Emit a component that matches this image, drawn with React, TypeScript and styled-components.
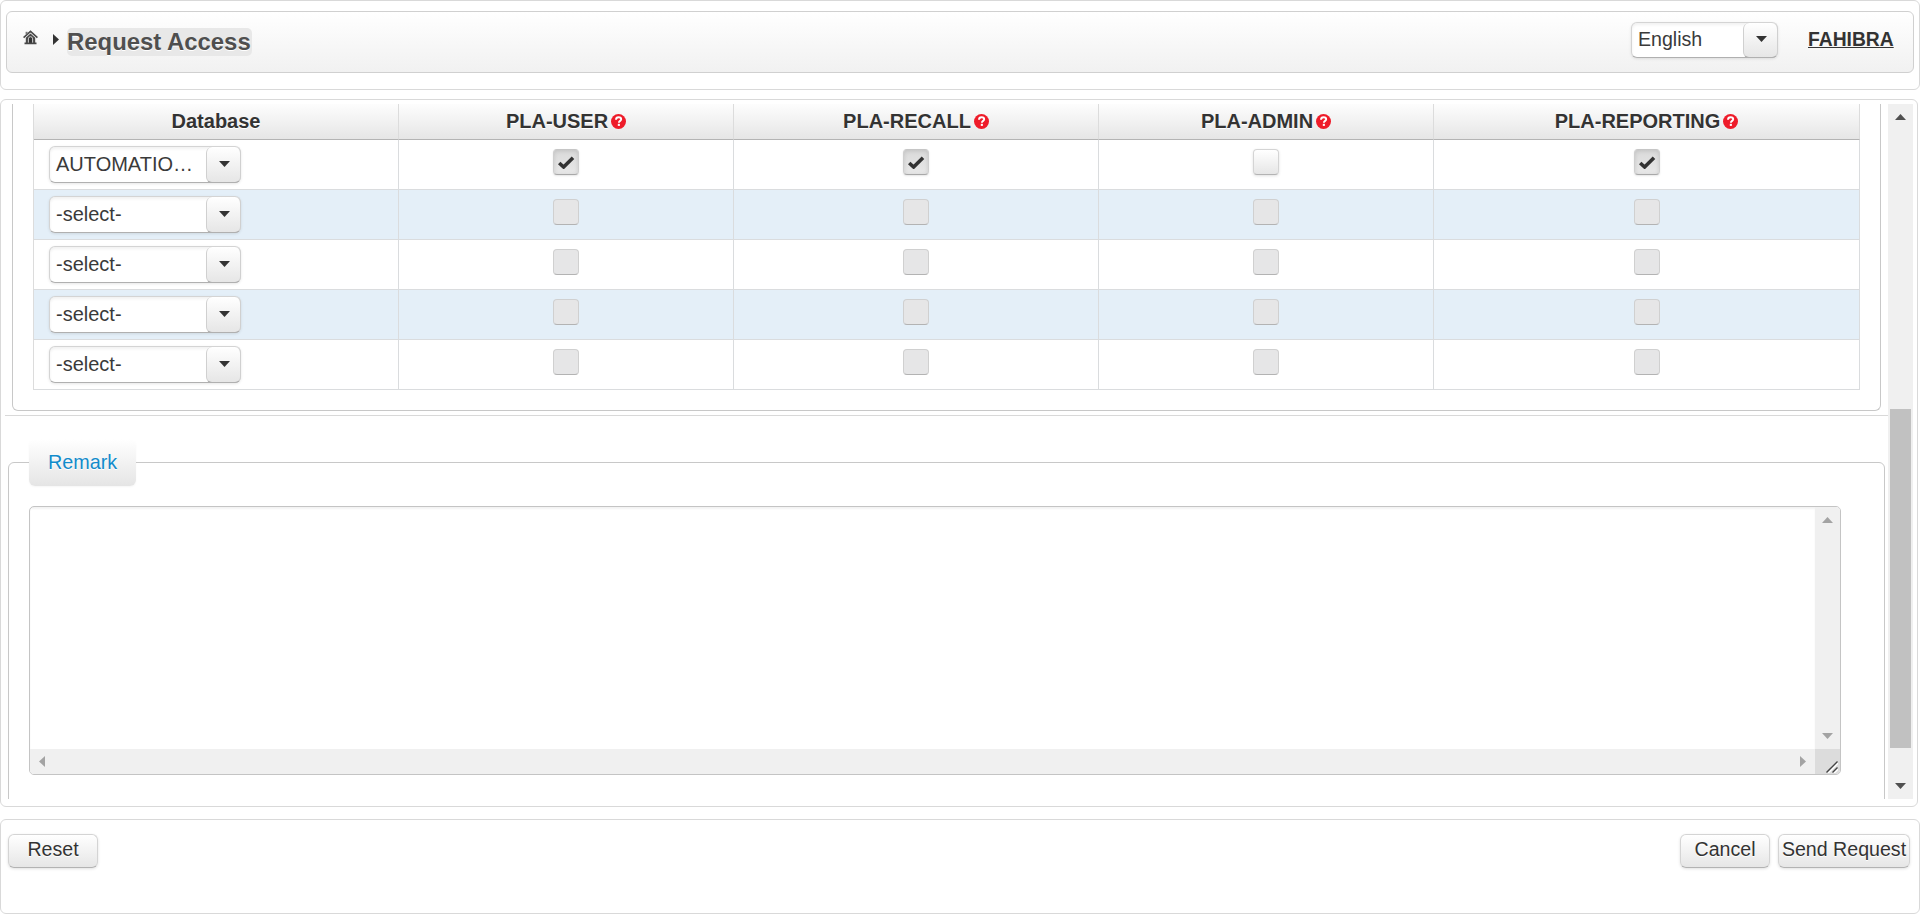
import React from "react";
import styled, { createGlobalStyle, css } from "styled-components";

const GlobalStyle = createGlobalStyle`
  * { box-sizing: border-box; }
  body {
    margin: 0;
    background: #fff;
    color: #333;
    font-family: "Liberation Sans", Arial, sans-serif;
    font-size: 20px;
  }
`;

const raised = css`
  background: linear-gradient(#fff, #e6e6e6);
  border: 1px solid #d4d4d4;
  border-bottom-color: #b3b3b3;
  box-shadow: 0 1px 3px rgba(0, 0, 0, 0.12);
`;

const Page = styled.div`
  width: 1920px;
  height: 914px;
  display: flex;
  flex-direction: column;
  overflow: hidden;
`;

const Panel = styled.section`
  border: 1px solid #d9d9d9;
  border-radius: 6px;
`;

const TopPanel = styled(Panel)`
  height: 90px;
  padding: 10px 5px;
`;

const TitleBar = styled.header`
  height: 62px;
  border: 1px solid #d0d0d0;
  border-radius: 6px;
  background: linear-gradient(#fff, #f1f1f1);
  display: flex;
  align-items: flex-start;
  padding: 10px 19px 0 16px;
`;

const HomeIcon = styled.svg`
  margin-top: 8px;
`;

const CrumbArrow = styled.svg`
  margin: 12px 0 0 15px;
`;

const Title = styled.h1`
  margin: 6px auto 0 8px;
  height: 28px;
  width: 185px;
  border-radius: 5px;
  background: #e8e8e8;
  color: #4f4f4f;
  font-size: 23.9px;
  line-height: 28px;
  white-space: nowrap;
  text-shadow: 0 1px 0 #fff;
`;

const UserLink = styled.a`
  margin-left: 30px;
  font-size: 19.3px;
  font-weight: bold;
  line-height: 35px;
  height: 36px;
  width: 86px;
  white-space: nowrap;
  text-decoration: underline;
  text-underline-offset: 1px;
  text-decoration-thickness: 1px;
`;

const SelectBox = styled.div<{ $w: number; $h: number; $size: number }>`
  width: ${(p) => p.$w}px;
  height: ${(p) => p.$h}px;
  font-size: ${(p) => p.$size}px;
  display: flex;
  border: 1px solid #d4d4d4;
  border-bottom-color: #b0b0b0;
  border-radius: 6px;
  background: #fff;
  box-shadow: inset 0 2px 3px rgba(0, 0, 0, 0.06), 0 1px 3px rgba(0, 0, 0, 0.1);
`;

const SelectValue = styled.span`
  flex: 1;
  min-width: 0;
  padding: 0 0 1px 6px;
  display: flex;
  align-items: center;
  white-space: nowrap;
  color: #3a3a3a;
`;

const SelectButton = styled.span`
  width: 35px;
  margin: 0 -1px -1px 0;
  border: 1px solid #d0d0d0;
  border-top: 0;
  border-bottom-color: #b0b0b0;
  border-radius: 6px;
  background: linear-gradient(#fff, #e6e6e6);
  display: flex;
  align-items: center;
  justify-content: center;
  padding: 0 0 2px 2px;
`;

const MainPanel = styled(Panel)`
  margin-top: 9px;
  width: 1918px;
  height: 708px;
  padding: 4px;
  display: flex;
`;

const Viewport = styled.div`
  width: 1883px;
  height: 695px;
  overflow: hidden;
`;

const AccessGroup = styled.div`
  height: 307px;
  margin: 0 7px;
  border: 1px solid #c8c8c8;
  border-top: 0;
  border-radius: 0 0 6px 6px;
  padding: 0 20px;
`;

const Grid = styled.div`
  border-left: 1px solid #dcdcdc;
`;

const Row = styled.div<{ $alt?: boolean }>`
  display: grid;
  grid-template-columns: 365px 335px 365px 335px 426px;
  height: 50px;
  background: ${(p) => (p.$alt ? "#e4eff8" : "#fff")};
`;

const HeadRow = styled(Row)`
  height: 36px;
  background: linear-gradient(#fdfdfd, #e5e5e5);
`;

const HeadCell = styled.div`
  border-right: 1px solid #dcdcdc;
  border-bottom: 1px solid #b4b4b4;
  display: flex;
  align-items: center;
  justify-content: center;
  gap: 3px;
  padding-bottom: 1px;
  font-size: 20px;
  font-weight: bold;
  text-shadow: 0 1px 0 #fff;
`;

const Cell = styled.div<{ $first?: boolean }>`
  border-right: 1px solid #dadcde;
  border-bottom: 1px solid #dadcde;
  display: flex;
  align-items: flex-start;
  justify-content: ${(p) => (p.$first ? "flex-start" : "center")};
  padding: ${(p) => (p.$first ? "6px 0 0 15px" : "9px 0 0")};
`;

type CheckState = "on" | "off" | "disabled";

const CheckBox = styled.span<{ $state: CheckState }>`
  width: 26px;
  height: 26px;
  border-radius: 4px;
  display: flex;
  align-items: center;
  justify-content: center;
  ${raised}
  ${(p) =>
    p.$state === "on" &&
    css`
      background: linear-gradient(#dadada, #e8e8e8);
      border-color: #c6c6c6 #cfcfcf #a8a8a8;
      box-shadow: inset 0 1px 4px rgba(0, 0, 0, 0.12), 0 1px 2px rgba(0, 0, 0, 0.1);
    `}
  ${(p) =>
    p.$state === "disabled" &&
    css`
      background: #e6e6e7;
      border-color: #d0d0d0 #d0d0d0 #b3b3b3;
      box-shadow: none;
    `}
`;

const Divider = styled.hr`
  margin: 4px 0 0;
  border: 0;
  height: 1px;
  background: #d9d9d9;
`;

const RemarkGroup = styled.fieldset`
  margin: 23px 3px 0;
  height: 420px;
  border: 1px solid #c8c8c8;
  border-radius: 6px;
  padding: 0 20px;
  min-width: 0;
`;

const Legend = styled.legend`
  width: 107px;
  height: 47px;
  padding: 0 0 0 19px;
  border-radius: 6px;
  background: linear-gradient(#fff, #e5e5e5);
  box-shadow: 0 1px 2px rgba(0, 0, 0, 0.04);
  color: #128bcb;
  font-size: 19.8px;
  line-height: 46px;
  text-shadow: 0 1px 0 #fff;
`;

const TextArea = styled.div`
  margin-top: 20px;
  width: 1812px;
  height: 269px;
  border: 1px solid #c4c4c4;
  border-radius: 5px;
  overflow: hidden;
  display: grid;
  grid-template-columns: 1fr 25px;
  grid-template-rows: 1fr 25px;
`;

const TextBody = styled.div`
  box-shadow: inset 0 2px 2px rgba(0, 0, 0, 0.05);
`;

const Track = styled.div<{ $horizontal?: boolean }>`
  background: #f0f0f0;
  display: flex;
  align-items: center;
  justify-content: space-between;
  flex-direction: ${(p) => (p.$horizontal ? "row" : "column")};
  padding: ${(p) => (p.$horizontal ? "0 9px" : "10px 0")};
`;

const Corner = styled.div`
  background: #dcdcdc;
  display: flex;
  align-items: flex-end;
  justify-content: flex-end;
  padding: 0 2px 1px 0;
`;

const PageTrack = styled.div`
  width: 25px;
  height: 695px;
  background: #f0f0f0;
  display: flex;
  flex-direction: column;
  align-items: center;
  padding: 10px 0;
`;

const Thumb = styled.div`
  width: 21px;
  height: 339px;
  margin: 289px 0 35px;
  background: #c1c1c1;
`;

const BottomPanel = styled(Panel)`
  margin-top: 12px;
  height: 95px;
  padding: 14px 9px 0 7px;
  display: flex;
  align-items: flex-start;
`;

const Button = styled.button<{ $w: number }>`
  ${raised}
  width: ${(p) => p.$w}px;
  height: 34px;
  padding: 0 0 3px;
  border-radius: 6px;
  font-family: inherit;
  font-size: 19.6px;
  color: #333;
  white-space: nowrap;
  text-shadow: 0 1px 0 #fff;
`;

const Spacer = styled.span`
  flex: 1;
`;

const ButtonGroup = styled.div`
  display: flex;
  gap: 8px;
`;

type Direction = "up" | "down" | "left" | "right";

const arrowShapes: Record<Direction, { w: number; h: number; d: string }> = {
  up: { w: 11, h: 6, d: "M5.5 0 11 6H0z" },
  down: { w: 11, h: 6, d: "M0 0h11L5.5 6z" },
  left: { w: 6, h: 11, d: "M6 0v11L0 5.5z" },
  right: { w: 6, h: 11, d: "M0 0v11l6-5.5z" },
};

function Arrow({ dir, color }: { dir: Direction; color: string }) {
  const { w, h, d } = arrowShapes[dir];
  return (
    <svg width={w} height={h}>
      <path d={d} fill={color} />
    </svg>
  );
}

function Select({ value, w, h, size }: { value: string; w: number; h: number; size: number }) {
  return (
    <SelectBox $w={w} $h={h} $size={size}>
      <SelectValue>{value}</SelectValue>
      <SelectButton>
        <Arrow dir="down" color="#333" />
      </SelectButton>
    </SelectBox>
  );
}

function Check({ state }: { state: CheckState }) {
  return (
    <CheckBox $state={state}>
      {state === "on" && (
        <svg width="18" height="14" viewBox="0 0 18 14">
          <path d="M2.2 8 6.6 12 16 2.8" fill="none" stroke="#333" strokeWidth="3.6" />
        </svg>
      )}
    </CheckBox>
  );
}

function HelpIcon() {
  return (
    <svg width="15" height="15" viewBox="0 0 15 15">
      <circle cx="7.5" cy="7.5" r="7.5" fill="#ee1c2a" />
      <path
        d="M5 5.7C5 4 6.1 3.2 7.6 3.2s2.6.9 2.6 2.1c0 1.6-2.3 1.6-2.3 3.4"
        fill="none"
        stroke="#fff"
        strokeWidth="1.9"
      />
      <rect x="6.8" y="9.8" width="2.1" height="2.1" fill="#fff" />
    </svg>
  );
}

const roles = ["PLA-USER", "PLA-RECALL", "PLA-ADMIN", "PLA-REPORTING"];

const blank: CheckState[] = ["disabled", "disabled", "disabled", "disabled"];

const rows: { database: string; checks: CheckState[] }[] = [
  { database: "AUTOMATIO…", checks: ["on", "on", "off", "on"] },
  { database: "-select-", checks: blank },
  { database: "-select-", checks: blank },
  { database: "-select-", checks: blank },
  { database: "-select-", checks: blank },
];

export default function App() {
  return (
    <Page>
      <GlobalStyle />
      <TopPanel>
        <TitleBar>
          <HomeIcon width="15" height="15" viewBox="0 0 15 15">
            <path d="M.6 7.6 7.5 1.4l6.9 6.2" fill="none" stroke="#4a4a4a" strokeWidth="1.7" />
            <path d="M2.6 1.8h2v2.4h-2z" fill="#777" />
            <path d="M7.5 3.4 12.2 7.8v4.8h1.3v1.6h-12v-1.6h1.3V7.8z" fill="#484848" />
            <path
              d="M5.4 12.6V8.8a2.1 2.1 0 0 1 4.2 0v3.8"
              fill="#333"
              stroke="#ddd"
              strokeWidth=".9"
            />
          </HomeIcon>
          <CrumbArrow width="6" height="11">
            <path d="M0 0v11l6-5.5z" fill="#333" />
          </CrumbArrow>
          <Title>Request Access</Title>
          <Select value="English" w={147} h={36} size={19.6} />
          <UserLink>FAHIBRA</UserLink>
        </TitleBar>
      </TopPanel>

      <MainPanel>
        <Viewport>
          <AccessGroup>
            <Grid>
              <HeadRow>
                <HeadCell>Database</HeadCell>
                {roles.map((role) => (
                  <HeadCell key={role}>
                    {role}
                    <HelpIcon />
                  </HeadCell>
                ))}
              </HeadRow>
              {rows.map((row, i) => (
                <Row key={i} $alt={i % 2 === 1}>
                  <Cell $first>
                    <Select value={row.database} w={192} h={37} size={20} />
                  </Cell>
                  {row.checks.map((state, j) => (
                    <Cell key={j}>
                      <Check state={state} />
                    </Cell>
                  ))}
                </Row>
              ))}
            </Grid>
          </AccessGroup>
          <Divider />
          <RemarkGroup>
            <Legend>Remark</Legend>
            <TextArea>
              <TextBody />
              <Track>
                <Arrow dir="up" color="#a3a3a3" />
                <Arrow dir="down" color="#a3a3a3" />
              </Track>
              <Track $horizontal>
                <Arrow dir="left" color="#a3a3a3" />
                <Arrow dir="right" color="#a3a3a3" />
              </Track>
              <Corner>
                <svg width="12" height="12" viewBox="0 0 12 12">
                  <path d="M2 12.2 12.2 2M8 12.2 12.2 8" stroke="#fff" strokeWidth="1.4" />
                  <path d="M.5 11.5 11.5.5M6.5 11.5l5-5" stroke="#444" strokeWidth="1.4" />
                </svg>
              </Corner>
            </TextArea>
          </RemarkGroup>
        </Viewport>
        <PageTrack>
          <Arrow dir="up" color="#505050" />
          <Thumb />
          <Arrow dir="down" color="#505050" />
        </PageTrack>
      </MainPanel>

      <BottomPanel>
        <Button $w={90}>Reset</Button>
        <Spacer />
        <ButtonGroup>
          <Button $w={90}>Cancel</Button>
          <Button $w={132}>Send Request</Button>
        </ButtonGroup>
      </BottomPanel>
    </Page>
  );
}
